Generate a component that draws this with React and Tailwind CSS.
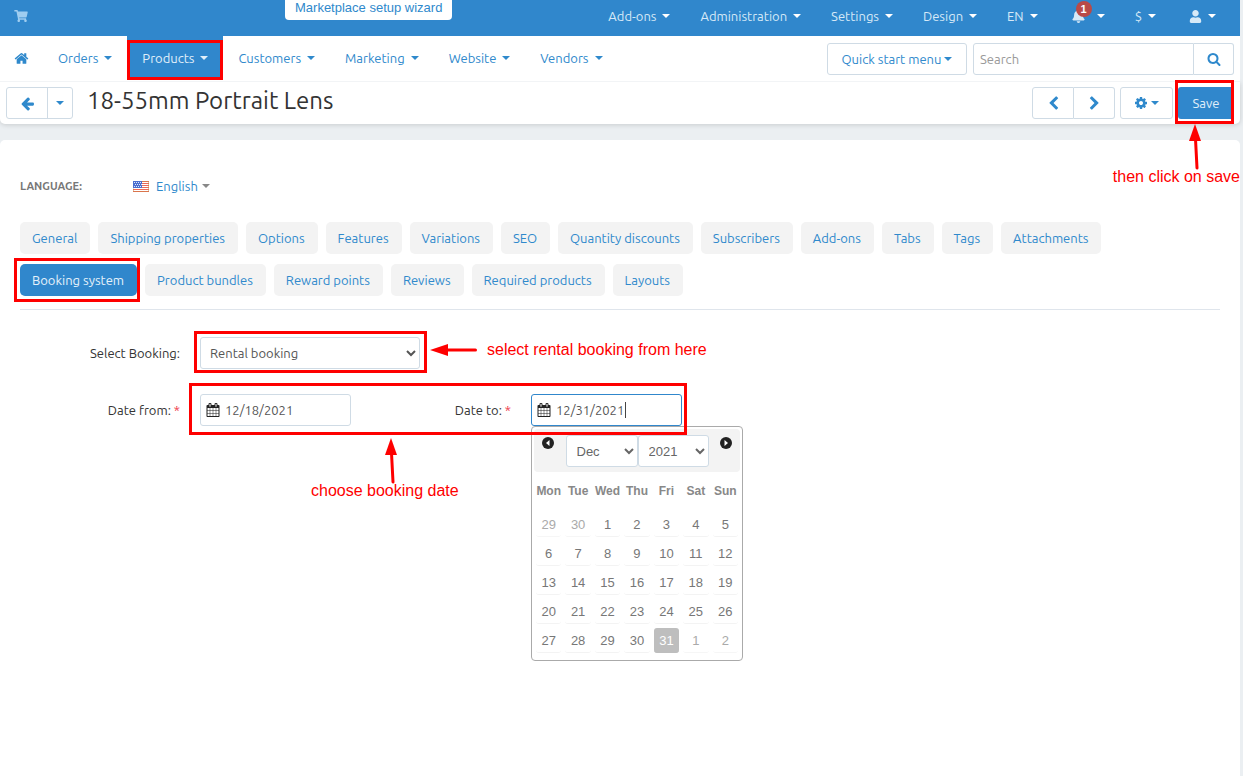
import React, { useState } from 'react';
import { FaBell, FaShoppingCart, FaUser } from 'react-icons/fa';

const ICONS = {
  home: 'M1472 992v480q0 26-19 45t-45 19h-384v-384h-256v384h-384q-26 0-45-19t-19-45v-480q0-1 .5-3t.5-3l575-474 575 474q1 2 1 6zm223-69l-62 74q-8 9-21 11h-3q-13 0-21-7l-692-577-692 577q-12 8-24 7-13-2-21-11l-62-74q-8-10-7-23.5t11-21.5l719-599q32-26 76-26t76 26l244 204v-195q0-14 9-23t23-9h192q14 0 23 9t9 23v408l219 182q10 8 11 21.5t-7 23.5z',
  back: 'M1664 896v128q0 53-32.5 90.5t-84.5 37.5h-704l293 294q38 36 38 90t-38 90l-75 76q-37 37-90 37-52 0-91-37l-651-652q-37-37-37-90 0-52 37-91l651-650q38-38 91-38 52 0 90 38l75 74q38 38 38 91t-38 91l-293 293h704q52 0 84.5 37.5t32.5 90.5z',
  left: 'M1427 301l-531 531 531 531q19 19 19 45t-19 45l-166 166q-19 19-45 19t-45-19l-742-742q-19-19-19-45t19-45l742-742q19-19 45-19t45 19l166 166q19 19 19 45t-19 45z',
  right: 'M1363 877l-742 742q-19 19-45 19t-45-19l-166-166q-19-19-19-45t19-45l531-531-531-531q-19-19-19-45t19-45l166-166q19-19 45-19t45 19l742 742q19 19 19 45t-19 45z',
  search: 'M1216 832q0-185-131.5-316.5t-316.5-131.5-316.5 131.5-131.5 316.5 131.5 316.5 316.5 131.5 316.5-131.5 131.5-316.5zm512 832q0 52-38 90t-90 38q-54 0-90-38l-343-342q-179 124-399 124-143 0-273.5-55.5t-225-150-150-225-55.5-273.5 55.5-273.5 150-225 225-150 273.5-55.5 273.5 55.5 225 150 150 225 55.5 273.5q0 220-124 399l343 343q37 37 37 90z',
  cog: 'M1152 896q0-106-75-181t-181-75-181 75-75 181 75 181 181 75 181-75 75-181zm512-109v222q0 12-8 23t-20 13l-185 28q-19 54-39 91 35 50 107 138 10 12 10 25t-9 23q-27 37-99 108t-94 71q-12 0-26-9l-138-108q-44 23-91 38-16 136-29 186-7 28-36 28h-222q-14 0-24.5-8.5t-11.5-21.5l-28-184q-49-16-90-37l-141 107q-10 9-25 9-14 0-25-11-126-114-165-168-7-10-7-23 0-12 8-23 15-21 51-66.5t54-70.5q-27-50-41-99l-183-27q-13-2-21-12.5t-8-23.5v-222q0-12 8-23t19-13l186-28q14-46 39-92-40-57-107-138-10-12-10-24 0-10 9-23 26-36 98.5-107.5t94.5-71.5q13 0 26 10l138 107q44-23 91-38 16-136 29-186 7-28 36-28h222q14 0 24.5 8.5t11.5 21.5l28 184q49 16 90 37l142-107q9-9 24-9 13 0 25 10 129 119 165 170 7 8 7 22 0 12-8 23-15 21-51 66.5t-54 70.5q26 50 41 98l183 28q13 2 21 12.5t8 23.5z',
  calendar: 'M192 1664h288v-288h-288v288zm352 0h320v-288h-320v288zm-352-352h288v-320h-288v320zm352 0h320v-320h-320v320zm-352-384h288v-288h-288v288zm736 736h320v-288h-320v288zm-384-736h320v-288h-320v288zm768 736h288v-288h-288v288zm-384-352h320v-320h-320v320zm-352-864v-288q0-13-9.5-22.5t-22.5-9.5h-64q-13 0-22.5 9.5t-9.5 22.5v288q0 13 9.5 22.5t22.5 9.5h64q13 0 22.5-9.5t9.5-22.5zm736 864h288v-320h-288v320zm-384-384h320v-288h-320v288zm384 0h288v-288h-288v288zm32-480v-288q0-13-9.5-22.5t-22.5-9.5h-64q-13 0-22.5 9.5t-9.5 22.5v288q0 13 9.5 22.5t22.5 9.5h64q13 0 22.5-9.5t9.5-22.5zm384-64v1280q0 52-38 90t-90 38h-1408q-52 0-90-38t-38-90v-1280q0-52 38-90t90-38h128v-96q0-66 47-113t113-47h64q66 0 113 47t47 113v96h384v-96q0-66 47-113t113-47h64q66 0 113 47t47 113v96h128q52 0 90 38t38 90z',
};

const NAV = ['Orders', 'Products', 'Customers', 'Marketing', 'Website', 'Vendors'];

const TABS = [
  'General', 'Shipping properties', 'Options', 'Features', 'Variations', 'SEO',
  'Quantity discounts', 'Subscribers', 'Add-ons', 'Tabs', 'Tags', 'Attachments',
  'Booking system', 'Product bundles', 'Reward points', 'Reviews', 'Required products', 'Layouts',
];

const WEEKDAYS = ['Mon', 'Tue', 'Wed', 'Thu', 'Fri', 'Sat', 'Sun'];
const WEEKS = [
  [29, 30, 1, 2, 3, 4, 5],
  [6, 7, 8, 9, 10, 11, 12],
  [13, 14, 15, 16, 17, 18, 19],
  [20, 21, 22, 23, 24, 25, 26],
  [27, 28, 29, 30, 31, 1, 2],
];

function Icon({ name, className }) {
  return (
    <svg viewBox="0 0 1792 1792" fill="currentColor" className={className} aria-hidden="true">
      <path d={ICONS[name]} />
    </svg>
  );
}

function Caret({ className = '' }) {
  return (
    <svg viewBox="0 0 8 4" fill="currentColor" className={`h-1 w-2 shrink-0 ${className}`} aria-hidden="true">
      <path d="M0 0h8L4 4z" />
    </svg>
  );
}

// red frame drawn round a highlighted control
function Frame({ className }) {
  return <span className={`pointer-events-none absolute z-20 border-3 border-[#fe0000] ${className}`} />;
}

function Note({ className, children }) {
  return (
    <span className={`pointer-events-none absolute z-20 whitespace-nowrap font-['Liberation_Sans',sans-serif] text-base leading-5 text-[#fe0000] ${className}`}>
      {children}
    </span>
  );
}

function UpArrow({ className }) {
  return (
    <svg viewBox="0 0 14 46" className={`pointer-events-none absolute z-20 h-[46px] w-3.5 ${className}`} aria-hidden="true">
      <path d="M6 0L12 17H0z" fill="#fe0000" />
      <path d="M6.500 15L8 44" stroke="#fe0000" strokeWidth="3" strokeLinecap="round" />
    </svg>
  );
}

function TopMenuItem({ children, label, className = '' }) {
  return (
    <button type="button" aria-label={label} className={`flex items-center gap-1.5 text-[#d6e9f7] ${className}`}>
      {children}
      <Caret className="text-white" />
    </button>
  );
}

function TopBar() {
  return (
    <div className="flex h-9 items-start bg-[#3087cc] pr-6 pl-3.5">
      <a href="#" aria-label="Storefront" className="pt-2.5 text-[#9fcdf0]">
        <FaShoppingCart className="h-3 w-3.5" />
      </a>
      <a href="#" className="ml-[257px] h-5 rounded-b-[4px] bg-white px-2.5 font-['Liberation_Sans',sans-serif] text-[13px] leading-4 text-[#2f89cc]">
        Marketplace setup wizard
      </a>
      <div className="ml-auto flex items-center gap-[30px] pt-1.5">
        <TopMenuItem>Add-ons</TopMenuItem>
        <TopMenuItem>Administration</TopMenuItem>
        <TopMenuItem>Settings</TopMenuItem>
        <TopMenuItem>Design</TopMenuItem>
        <TopMenuItem>EN</TopMenuItem>
        <TopMenuItem label="Notifications" className="ml-1">
          <span className="relative mr-1.5">
            <FaBell className="h-3.5 w-[13px]" />
            <span className="absolute -top-2 left-1 flex size-4 items-center justify-center rounded-full bg-[#b94a48] font-['Liberation_Sans',sans-serif] text-[11px] leading-4 font-bold text-white">1</span>
          </span>
        </TopMenuItem>
        <TopMenuItem>$</TopMenuItem>
        <TopMenuItem label="Account" className="ml-[3px]">
          <FaUser className="size-[13px]" />
        </TopMenuItem>
      </div>
    </div>
  );
}

function MainNav() {
  return (
    <nav className="relative z-10 flex items-start border-b border-[#f2f4f6] bg-white pr-1.5">
      <a href="#" aria-label="Home" className="flex h-11 items-center px-3.5 text-[#2f89cc]">
        <Icon name="home" className="size-[15px]" />
      </a>
      {NAV.map((item) => (
        <a
          key={item}
          href="#"
          className={`relative mb-px flex h-11 items-center gap-1.5 px-[15px] ${
            item === 'Products' ? 'bg-[#3087cc] text-[#e0effa]' : 'text-[#2f89cc]'
          }`}
        >
          {item}
          <Caret />
          {item === 'Products' && <Frame className="top-1 right-0 bottom-0 left-0" />}
        </a>
      ))}
      <button type="button" className="mt-[7px] ml-auto flex h-8 w-[140px] shrink-0 items-center justify-center gap-[3px] rounded-[3px] border border-[#cfdbe5] text-[#2f89cc]">
        Quick start menu
        <Caret />
      </button>
      <form className="mt-[7px] ml-1.5 flex h-8">
        <input
          type="search"
          aria-label="Search"
          placeholder="Search"
          className="w-[221px] rounded-l-[3px] border border-[#cfdbe5] px-1.5 placeholder:text-[#999]"
        />
        <button type="button" aria-label="Run search" className="flex w-10 items-center justify-center rounded-r-[3px] border border-l-0 border-[#cfdbe5] text-[#2f89cc]">
          <Icon name="search" className="size-[14px]" />
        </button>
      </form>
    </nav>
  );
}

function TitleBar() {
  return (
    <header className="relative flex items-start rounded-b-[5px] bg-white px-1.5 pt-[5px] pb-[5px] shadow-[0_1px_5px_rgba(0,0,0,0.15)]">
      <div className="flex h-8 rounded-[3px] border border-[#cfdbe5] text-[#2f89cc]">
        <button type="button" aria-label="Back" className="flex w-[41px] items-center justify-center border-r border-[#cfdbe5]">
          <Icon name="back" className="size-[15px]" />
        </button>
        <button type="button" aria-label="Recent pages" className="flex w-6 items-center justify-center">
          <Caret />
        </button>
      </div>
      <h1 className="ml-3.5 text-2xl leading-7 text-[#333]">18-55mm Portrait Lens</h1>
      <div className="ml-auto flex h-8 text-[#2f89cc]">
        <button type="button" aria-label="Previous" className="flex w-[42px] items-center justify-center rounded-l-[3px] border border-[#cfdbe5]">
          <Icon name="left" className="size-[15px]" />
        </button>
        <button type="button" aria-label="Next" className="flex w-[41px] items-center justify-center rounded-r-[3px] border border-l-0 border-[#cfdbe5]">
          <Icon name="right" className="size-[15px]" />
        </button>
        <button type="button" aria-label="Tools" className="ml-[5px] flex w-[53px] items-center justify-center gap-[3px] rounded-[3px] border border-[#cfdbe5]">
          <Icon name="cog" className="size-[14px]" />
          <Caret />
        </button>
        <div className="relative z-10 ml-[5px]">
          <button type="button" className="h-8 w-14 rounded-[3px] bg-[#3087cc] text-[#e0effa]">Save</button>
          <Frame className="-top-[7px] right-0 -bottom-[5px] -left-[3px]" />
          <UpArrow className="top-[37px] left-[11px]" />
          <Note className="top-20 -right-1.5">then click on save</Note>
        </div>
      </div>
    </header>
  );
}

function Flag() {
  return (
    <svg viewBox="0 0 16 11" className="h-[11px] w-4" aria-hidden="true">
      <path d="M0 0h16v11H0z" fill="#fff" />
      <path d="M0 .5h16M0 2.500h16M0 4.500h16M0 6.500h16M0 8.500h16M0 10.500h16" stroke="#ea6a5c" />
      <path d="M0 0h9v7H0z" fill="#4a6fd0" />
      <path d="M1 1.500h8M2 3.500h7M1 5.500h8" stroke="#dfe7fa" strokeDasharray="1 1" />
      <path d="M.5 7.500v3h15V.5H9" fill="none" stroke="#c9803c" strokeOpacity=".5" />
    </svg>
  );
}

function Tabs() {
  const [active, setActive] = useState('Booking system');
  return (
    <div className="mt-[26px] flex flex-wrap gap-x-2 gap-y-2.5 border-b border-[#dfe5ec] pb-[13px]">
      {TABS.map((tab) => (
        <div key={tab} className="relative">
          <button
            type="button"
            onClick={() => setActive(tab)}
            className={`h-8 rounded-[5px] pr-[13px] pl-3 ${active === tab ? 'bg-[#3087cc] text-[#e6f2fb]' : 'bg-[#f3f3f3] text-[#2f89cc]'}`}
          >
            {tab}
          </button>
          {tab === 'Booking system' && <Frame className="-top-1.5 -right-[3px] -bottom-1.5 -left-1.5" />}
        </div>
      ))}
    </div>
  );
}

function DateField({ id, label, value, focused, children }) {
  return (
    <div className="flex items-center gap-5">
      <label htmlFor={id} className="w-40 text-right text-[#333]">
        {label}: <span className="text-[#ee3344]">*</span>
      </label>
      <div className="relative">
        <Icon name="calendar" className="absolute top-[9px] left-1.5 size-[14px] text-[#222]" />
        <input
          id={id}
          type="text"
          defaultValue={value}
          className={`block h-8 w-[151px] rounded-[3px] border pr-1.5 pl-6 text-[#555] outline-none ${focused ? 'border-[#3087cc]' : 'border-[#cfdbe5]'}`}
        />
        {focused && <span className="absolute top-2 left-[94px] h-4 w-px bg-[#444]" />}
        {children}
      </div>
    </div>
  );
}

function MonthArrow({ flip, label }) {
  return (
    <button type="button" aria-label={label} className="mt-2 size-3">
      <svg viewBox="0 0 12 12" className={flip ? 'size-3 rotate-180' : 'size-3'} aria-hidden="true">
        <circle cx="6" cy="6" r="6" fill="#222" />
        <path d="M7.500 3v6L4 6z" fill="#fff" />
      </svg>
    </button>
  );
}

function DatePicker() {
  return (
    <div className="absolute top-8 left-0 z-10 w-[212px] rounded-[4px] border border-[#aaa] bg-white p-0.5 font-['Liberation_Sans',sans-serif]">
      <div className="flex h-[43px] justify-between rounded-[4px] bg-[#f3f3f3] px-2">
        <MonthArrow label="Previous month" />
        <div className="flex pt-1.5">
          <select aria-label="Month" className="h-8 w-[72px] rounded-[3px] border border-[#cfdbe5] bg-white px-1.5 text-[#666]">
            <option>Dec</option>
          </select>
          <select aria-label="Year" className="h-8 w-[71px] rounded-[3px] border border-[#cfdbe5] bg-white px-1.5 text-[#666]">
            <option>2021</option>
          </select>
        </div>
        <MonthArrow flip label="Next month" />
      </div>
      <table className="mb-[3px] w-full table-fixed text-center">
        <thead>
          <tr>
            {WEEKDAYS.map((day) => (
              <th key={day} className="h-[38px] text-[12px] font-bold text-[#888]">{day}</th>
            ))}
          </tr>
        </thead>
        <tbody>
          {WEEKS.map((week, w) => (
            <tr key={w}>
              {week.map((day, d) => {
                const other = (w === 0 && day > 7) || (w === 4 && day < 7);
                const selected = w === 4 && day === 31;
                return (
                  <td key={d} className="h-[29px] px-0.5 py-0">
                    <a
                      href="#"
                      className={`block h-[25px] rounded-[3px] border-b leading-[26px] ${
                        selected
                          ? 'border-[#bebebe] bg-[#bebebe] text-white'
                          : other
                            ? 'border-[#f6f6f6] text-[#aaa]'
                            : 'border-[#f3f3f3] text-[#777]'
                      }`}
                    >
                      {day}
                    </a>
                  </td>
                );
              })}
            </tr>
          ))}
        </tbody>
      </table>
    </div>
  );
}

function BookingForm() {
  return (
    <div className="mt-[27px] flex flex-col items-start gap-[25px]">
      <div className="flex items-center gap-5">
        <label htmlFor="booking" className="w-40 text-right text-[#333]">Select Booking:</label>
        <div className="relative">
          <select id="booking" className="block h-8 w-[220px] rounded-[3px] border border-[#cfdbe5] bg-white px-[5px] text-[#555]">
            <option>Rental booking</option>
          </select>
          <Frame className="-top-1.5 -right-[7px] -bottom-1 -left-1.5" />
          <svg viewBox="0 0 48 12" className="pointer-events-none absolute top-[7px] left-[230px] h-3 w-12" aria-hidden="true">
            <path d="M0 6L18 0V12z" fill="#fe0000" />
            <path d="M16 6H45.500" stroke="#fe0000" strokeWidth="3" strokeLinecap="round" />
          </svg>
          <Note className="top-[3px] left-[287px]">select rental booking from here</Note>
        </div>
      </div>
      <div className="relative flex">
        <DateField id="date-from" label="Date from" value="12/18/2021" />
        <DateField id="date-to" label="Date to" value="12/31/2021" focused>
          <DatePicker />
        </DateField>
        <Frame className="-top-[11px] -right-[5px] -bottom-[9px] left-[169px]" />
        <UpArrow className="top-11 left-[365px]" />
        <Note className="top-[87px] left-[291px]">choose booking date</Note>
      </div>
    </div>
  );
}

function App() {
  return (
    <div className="flex min-h-screen flex-col bg-[#ebeff2] pr-[3px] font-['Ubuntu','Noto_Sans',sans-serif] text-[13px] leading-5">
      <TopBar />
      <MainNav />
      <TitleBar />
      <main className="mt-4 grow rounded-t-[5px] bg-white px-5 pt-9">
        <div className="flex items-center">
          <span className="w-[113px] text-[11px] font-bold text-[#777]">LANGUAGE:</span>
          <button type="button" className="flex items-center text-[#2f89cc]">
            <Flag />
            <span className="ml-[7px]">English</span>
            <Caret className="ml-1 text-[#888]" />
          </button>
        </div>
        <Tabs />
        <BookingForm />
      </main>
    </div>
  );
}

export default App;
